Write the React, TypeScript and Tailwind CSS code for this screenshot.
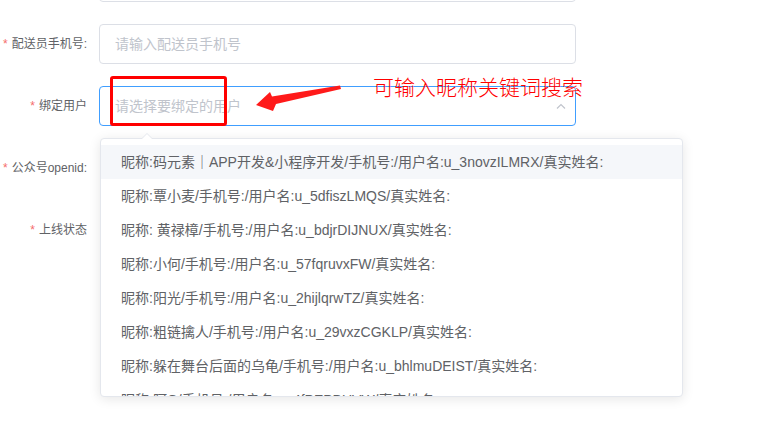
import React from "react";

const users = [
  "昵称:码元素｜APP开发&小程序开发/手机号:/用户名:u_3novzILMRX/真实姓名:",
  "昵称:覃小麦/手机号:/用户名:u_5dfiszLMQS/真实姓名:",
  "昵称: 黄禄樟/手机号:/用户名:u_bdjrDIJNUX/真实姓名:",
  "昵称:小何/手机号:/用户名:u_57fqruvxFW/真实姓名:",
  "昵称:阳光/手机号:/用户名:u_2hijlqrwTZ/真实姓名:",
  "昵称:粗链擒人/手机号:/用户名:u_29vxzCGKLP/真实姓名:",
  "昵称:躲在舞台后面的乌龟/手机号:/用户名:u_bhlmuDEIST/真实姓名:",
  "昵称:阿Q/手机号:/用户名:u_4fPEPBUVW/真实姓名:",
];

function Label({ text }: { text?: string }) {
  return (
    <div className="flex w-[99px] shrink-0 items-center justify-end pr-[12px] text-[12px] text-[#606266]">
      {text && (
        <>
          <span className="mr-[4px] text-[#f56c6c]">*</span>
          <span>{text}</span>
        </>
      )}
    </div>
  );
}

function Input({
  placeholder,
  focus,
  hidden,
}: {
  placeholder?: string;
  focus?: boolean;
  hidden?: boolean;
}) {
  return (
    <div
      className={`relative flex h-[40px] w-[477px] items-center rounded-[4px] border px-[15px] text-[14px] text-[#c0c4cc] ${
        focus ? "border-[#409eff]" : "border-[#dcdfe6]"
      } ${hidden ? "invisible" : ""}`}
    >
      {placeholder}
      {focus && (
        <svg
          className="absolute right-[9px] top-[16px]"
          width="10"
          height="6"
          viewBox="0 0 10 6"
          fill="none"
        >
          <path d="M1 5.5 L5 1.5 L9 5.5" stroke="#c0c4cc" strokeWidth="1.2" />
        </svg>
      )}
    </div>
  );
}

function Row({ label, children }: { label?: string; children: React.ReactNode }) {
  return (
    <div className="flex h-[40px]">
      <Label text={label} />
      {children}
    </div>
  );
}

export default function App() {
  return (
    <div
      className="relative h-[435px] w-[757px] overflow-hidden bg-white"
      style={{ fontFamily: '"Liberation Sans", "Noto Sans CJK SC", sans-serif' }}
    >
      <div className="mt-[-38px] flex flex-col gap-[22px]">
        <Row>
          <Input />
        </Row>
        <Row label="配送员手机号:">
          <Input placeholder="请输入配送员手机号" />
        </Row>
        <Row label="绑定用户">
          <Input placeholder="请选择要绑定的用户" focus />
        </Row>
        <Row label="公众号openid:">
          <Input hidden />
        </Row>
        <Row label="上线状态">
          <Input hidden />
        </Row>
      </div>

      {/* dropdown */}
      <div className="absolute left-[100px] top-[138px] h-[259px] w-[583px] rounded-[4px] border border-[#e4e7ed] bg-white shadow-[0_2px_12px_0_rgba(0,0,0,0.1)]">
        <div className="absolute left-[40px] top-[-6px] h-0 w-0 border-x-[6px] border-b-[6px] border-x-transparent border-b-[#e4e7ed]" />
        <div className="absolute left-[41px] top-[-5px] h-0 w-0 border-x-[5px] border-b-[5px] border-x-transparent border-b-white" />
        <div className="h-full overflow-hidden py-[6px]">
          {users.map((u, i) => (
            <div
              key={u}
              className={`flex h-[34px] items-center whitespace-nowrap px-[20px] text-[14px] text-[#606266] ${
                i === 0 ? "bg-[#f5f7fa]" : ""
              }`}
            >
              {u}
            </div>
          ))}
        </div>
      </div>

      {/* annotations */}
      <div className="absolute left-[110px] top-[76px] h-[50px] w-[117px] rounded-[3px] border-[3px] border-[#ff0000]" />
      <svg className="absolute left-0 top-0" width="757" height="435" viewBox="0 0 757 435">
        <polygon
          points="256,105 270,92 272,96.5 340,85.5 341,89 276,104 273,111"
          fill="#ff1a1a"
        />
      </svg>
      <div className="absolute left-[373px] top-[74px] text-[21px] font-light leading-[28px] text-[#ff0000]">
        可输入昵称关键词搜索
      </div>
    </div>
  );
}
